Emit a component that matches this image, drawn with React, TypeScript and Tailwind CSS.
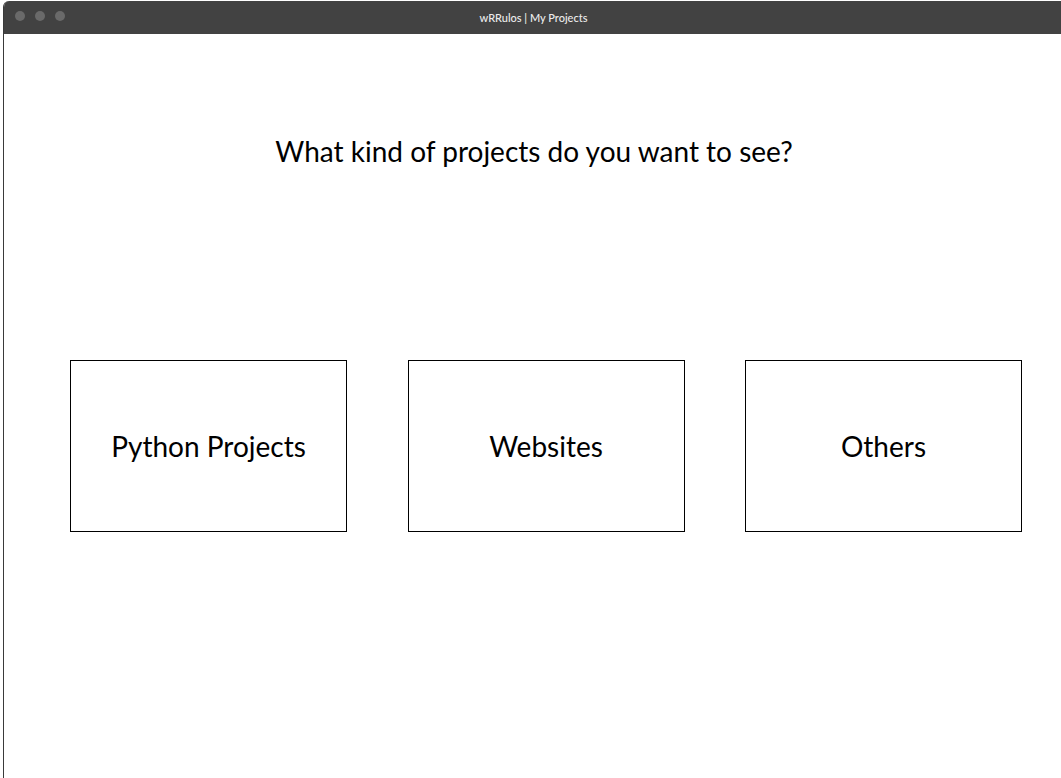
export default function App() {
  const cards = ["Python Projects", "Websites", "Others"]

  return (
    <div className="h-[778px] w-[1061px] bg-white pt-px pl-[3px] overflow-hidden" style={{ fontFamily: "Lato, 'Open Sans', sans-serif" }}>
      <div className="flex h-[777px] flex-col border-l border-[#3a3a3a] rounded-tl-[6px] overflow-hidden">
        {/* title bar */}
        <div className="relative flex h-[33px] shrink-0 items-center justify-center bg-[#424242] pt-[2px]">
          <div className="absolute left-[11px] top-[10px] flex gap-[10px]">
            <span className="h-[10px] w-[10px] rounded-full bg-[#6a6a6a]" />
            <span className="h-[10px] w-[10px] rounded-full bg-[#6a6a6a]" />
            <span className="h-[10px] w-[10px] rounded-full bg-[#6a6a6a]" />
          </div>
          <span className="pl-[2px] text-[11px] font-medium text-[#ececec]">wRRulos | My Projects</span>
        </div>

        {/* content */}
        <div className="flex flex-1 flex-col">
          <h1 className="mt-[97px] pl-[3px] text-center text-[28px] leading-[40px] text-black">
            What kind of projects do you want to see?
          </h1>
          <div className="mt-[189px] flex gap-[60.5px] pl-[66px]">
            {cards.map((c) => (
              <div
                key={c}
                className="flex h-[172px] w-[277px] items-center justify-center border border-black text-[28px] text-black"
              >
                {c}
              </div>
            ))}
          </div>
        </div>
      </div>
    </div>
  )
}
